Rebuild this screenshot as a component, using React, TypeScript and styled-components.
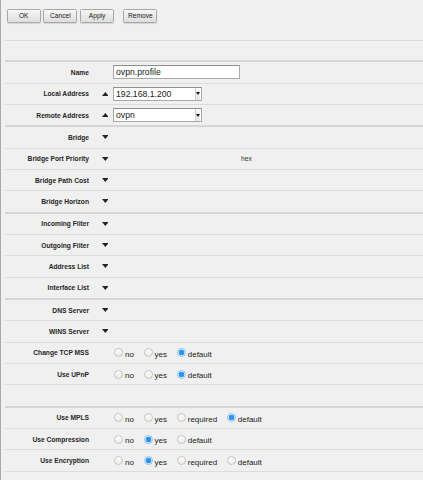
import React from 'react';
import styled, { createGlobalStyle } from 'styled-components';

const Global = createGlobalStyle`
  html, body { margin: 0; padding: 0; background: #f0f0f0; }
  body { font-family: "Liberation Sans", Arial, sans-serif; color: #222; }
`;

const Page = styled.div`
  height: 480px;
  box-sizing: border-box;
  border-left: 1px solid #aaaaaa;
  padding-left: 4px;
  background: #f0f0f0;
  overflow: hidden;
`;

const Toolbar = styled.div`
  height: 40px;
  border-bottom: 1px solid #dadada;
  display: flex;
  align-items: flex-start;
  gap: 2.7px;
  padding: 8.5px 0 0 1.7px;
  box-sizing: border-box;
  height: 41px;
`;

const Button = styled.button<{ $spaced?: boolean }>`
  width: 34px;
  height: 14px;
  box-sizing: border-box;
  margin: 0 0 0 ${p => (p.$spaced ? '6.7px' : '0')};
  padding: 0;
  border: 1px solid #a8a8a8;
  border-radius: 1.5px;
  background: linear-gradient(#f6f6f6, #dedede);
  box-shadow: 0 1px 1px rgba(0, 0, 0, 0.12);
  font-family: "Liberation Sans", Arial, sans-serif;
  font-size: 6.67px;
  color: #222;
`;

const Spacer = styled.div`
  height: 19.33px;
  border-bottom: 2px solid #d6d6d6;
`;

const Row = styled.div<{ $thick?: boolean; $last?: boolean }>`
  height: 20.33px;
  display: flex;
  align-items: center;
  border-bottom: ${p => (p.$thick ? '2px solid #d6d6d6' : '1px solid #dcdcdc')};
`;

const Label = styled.div`
  width: 84px;
  text-align: right;
  font-size: 6.67px;
  font-weight: bold;
  color: #252525;
  white-space: nowrap;
`;

const ArrowCell = styled.div`
  width: 6.67px;
  margin-left: 12.67px;
  display: flex;
  align-items: center;
  justify-content: center;
`;

const Control = styled.div`
  margin-left: 5px;
  display: flex;
  align-items: center;
  flex: 1;
`;

const TextInput = styled.input`
  width: 126.7px;
  height: 14px;
  box-sizing: border-box;
  margin: 0;
  padding: 0 0 0 1.7px;
  border: 1px solid #a8a8a8;
  border-top-color: #8e8e8e;
  background: #fff;
  font-family: "Liberation Sans", Arial, sans-serif;
  font-size: 8.67px;
  color: #222;
  outline: none;
`;

const SelectBox = styled.div`
  width: 88.4px;
  height: 14px;
  box-sizing: border-box;
  border: 1px solid #a8a8a8;
  border-top-color: #8e8e8e;
  background: #fff;
  display: flex;
  align-items: center;
  font-size: 8.67px;
  color: #222;
  padding-left: 1.7px;
`;

const SelectText = styled.span`
  flex: 1;
`;

const SelectHandle = styled.span`
  width: 5px;
  height: 12px;
  box-sizing: border-box;
  border-left: 1px solid #cfcfcf;
  background: linear-gradient(#fafafa, #e6e6e6);
  display: flex;
  align-items: center;
  justify-content: center;
  margin-right: 1px;
`;

const Hint = styled.span`
  margin-left: 127.7px;
  font-size: 6.67px;
  color: #333;
`;

const RadioGroup = styled.div`
  display: flex;
  align-items: flex-end;
  margin-left: 0.7px;
`;

const Option = styled.label`
  display: flex;
  align-items: flex-end;
  margin-right: 9.7px;
`;

const Circle = styled.span<{ $on?: boolean }>`
  width: 9px;
  height: 9px;
  box-sizing: border-box;
  border-radius: 50%;
  border: 1px solid ${p => (p.$on ? '#8fc4ef' : '#c4c4c4')};
  background: ${p =>
    p.$on
      ? 'radial-gradient(circle, #2e93ea 0, #2e93ea 52%, #d9ecfb 62%, #eef6fd 100%)'
      : 'linear-gradient(#fdfdfd, #ececec)'};
`;

const OptionText = styled.span`
  margin-left: 2px;
  margin-bottom: -1.8px;
  font-size: 8px;
  line-height: 8px;
  color: #222;
`;

const Tri = ({ up }: { up?: boolean }) => (
  <svg width="7" height="4" viewBox="0 0 7 4">
    <polygon points={up ? '0,4 7,4 3.5,0' : '0,0 7,0 3.5,4'} fill="#222" />
  </svg>
);

const SmallTri = () => (
  <svg width="4" height="3" viewBox="0 0 4 3">
    <polygon points="0,0 4,0 2,3" fill="#111" />
  </svg>
);

type Ctrl =
  | { kind: 'input'; value: string }
  | { kind: 'select'; value: string }
  | { kind: 'hint'; value: string }
  | { kind: 'radio'; options: string[]; selected: string }
  | { kind: 'none' };

interface RowDef {
  label: string;
  arrow?: 'up' | 'down';
  ctrl: Ctrl;
  thick?: boolean;
}

const rows: RowDef[] = [
  { label: 'Name', ctrl: { kind: 'input', value: 'ovpn.profile' } },
  { label: 'Local Address', arrow: 'up', ctrl: { kind: 'select', value: '192.168.1.200' } },
  { label: 'Remote Address', arrow: 'up', ctrl: { kind: 'select', value: 'ovpn' }, thick: true },
  { label: 'Bridge', arrow: 'down', ctrl: { kind: 'none' } },
  { label: 'Bridge Port Priority', arrow: 'down', ctrl: { kind: 'hint', value: 'hex' } },
  { label: 'Bridge Path Cost', arrow: 'down', ctrl: { kind: 'none' } },
  { label: 'Bridge Horizon', arrow: 'down', ctrl: { kind: 'none' }, thick: true },
  { label: 'Incoming Filter', arrow: 'down', ctrl: { kind: 'none' } },
  { label: 'Outgoing Filter', arrow: 'down', ctrl: { kind: 'none' } },
  { label: 'Address List', arrow: 'down', ctrl: { kind: 'none' } },
  { label: 'Interface List', arrow: 'down', ctrl: { kind: 'none' }, thick: true },
  { label: 'DNS Server', arrow: 'down', ctrl: { kind: 'none' } },
  { label: 'WINS Server', arrow: 'down', ctrl: { kind: 'none' } },
  { label: 'Change TCP MSS', ctrl: { kind: 'radio', options: ['no', 'yes', 'default'], selected: 'default' } },
  { label: 'Use UPnP', ctrl: { kind: 'radio', options: ['no', 'yes', 'default'], selected: 'default' } },
  { label: '', ctrl: { kind: 'none' }, thick: true },
  { label: 'Use MPLS', ctrl: { kind: 'radio', options: ['no', 'yes', 'required', 'default'], selected: 'default' } },
  { label: 'Use Compression', ctrl: { kind: 'radio', options: ['no', 'yes', 'default'], selected: 'yes' } },
  { label: 'Use Encryption', ctrl: { kind: 'radio', options: ['no', 'yes', 'required', 'default'], selected: 'yes' } },
];

const renderCtrl = (c: Ctrl) => {
  switch (c.kind) {
    case 'input':
      return <TextInput readOnly defaultValue={c.value} />;
    case 'select':
      return (
        <SelectBox>
          <SelectText>{c.value}</SelectText>
          <SelectHandle>
            <SmallTri />
          </SelectHandle>
        </SelectBox>
      );
    case 'hint':
      return <Hint>{c.value}</Hint>;
    case 'radio':
      return (
        <RadioGroup>
          {c.options.map(o => (
            <Option key={o}>
              <Circle $on={o === c.selected} />
              <OptionText>{o}</OptionText>
            </Option>
          ))}
        </RadioGroup>
      );
    default:
      return null;
  }
};

export default function App() {
  return (
    <>
      <Global />
      <Page>
        <Toolbar>
          <Button>OK</Button>
          <Button>Cancel</Button>
          <Button>Apply</Button>
          <Button $spaced>Remove</Button>
        </Toolbar>
        <Spacer />
        {rows.map((r, i) => (
          <Row key={i} $thick={r.thick}>
            <Label>{r.label}</Label>
            <ArrowCell>{r.arrow && <Tri up={r.arrow === 'up'} />}</ArrowCell>
            <Control>{renderCtrl(r.ctrl)}</Control>
          </Row>
        ))}
      </Page>
    </>
  );
}
